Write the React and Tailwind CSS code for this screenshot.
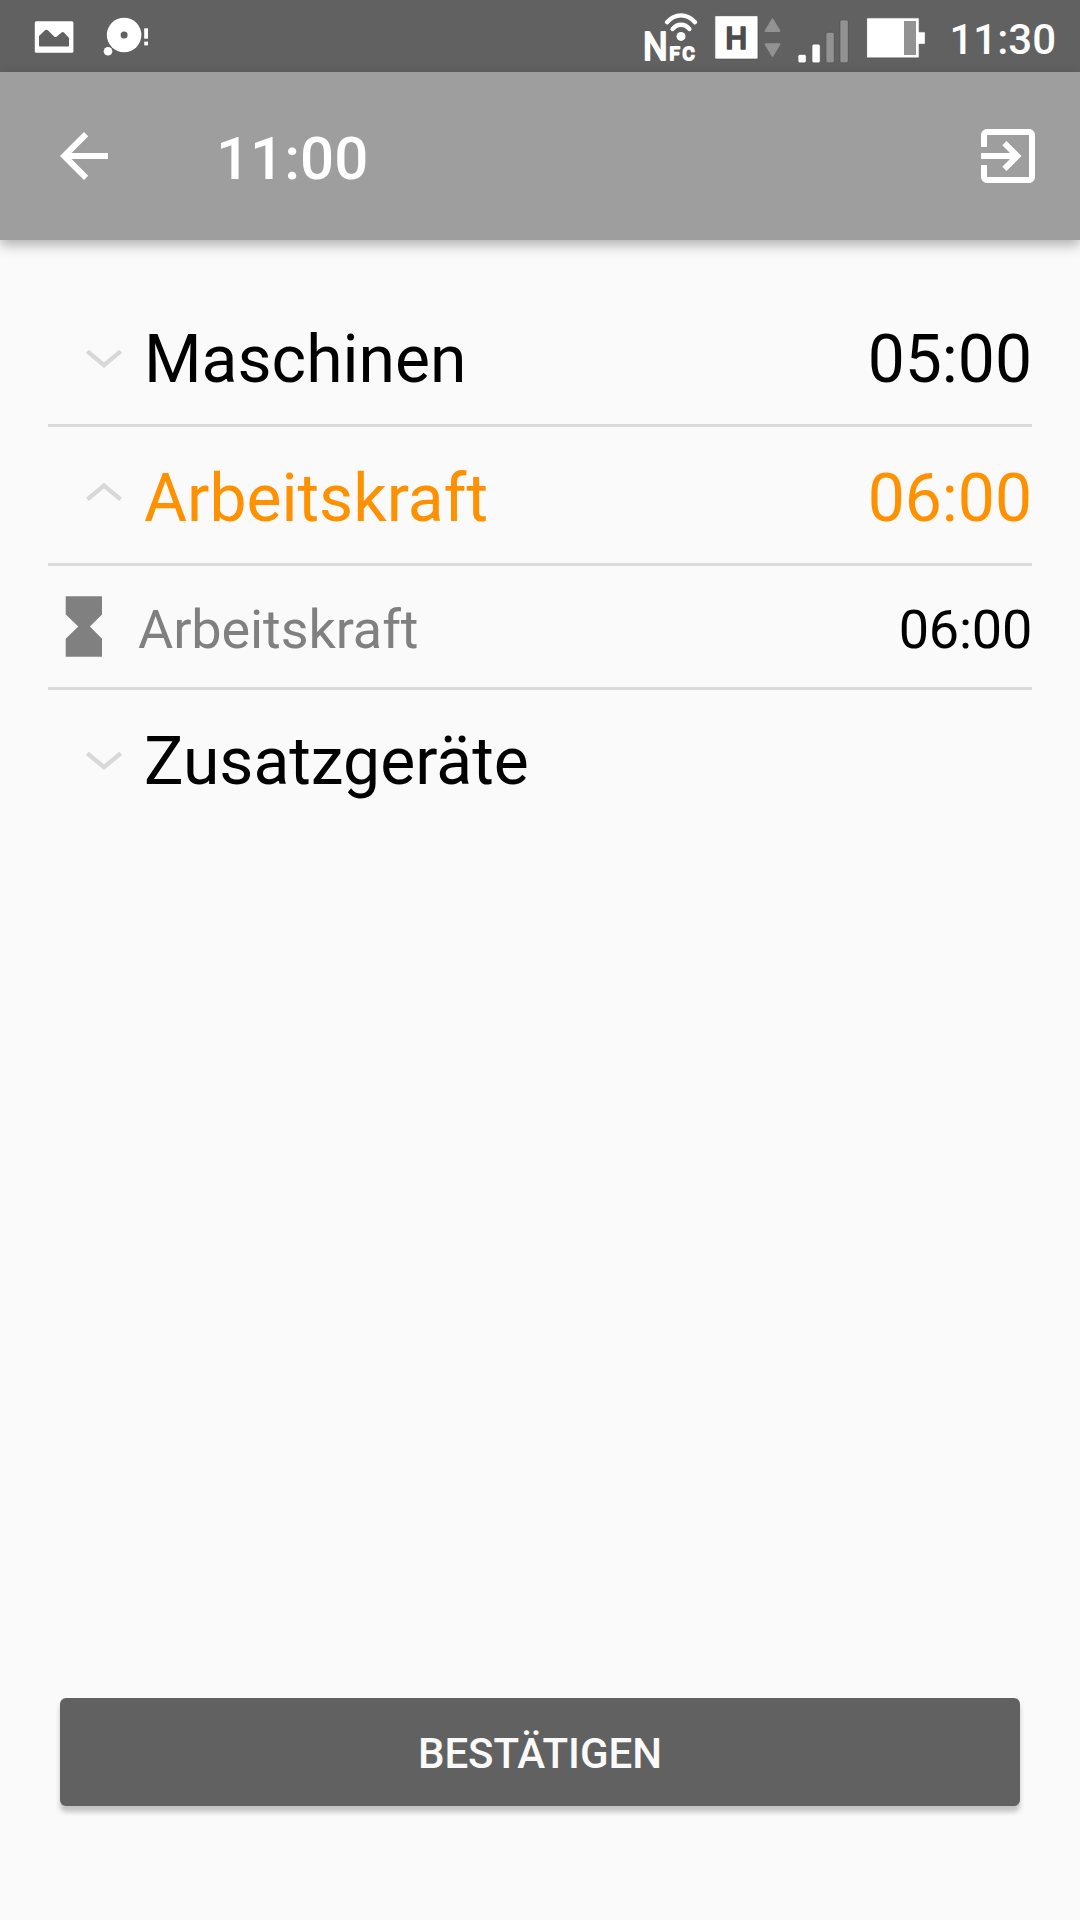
import { useState } from "react";
import { MdArrowBack, MdExitToApp } from "react-icons/md";

const groups = [
  { id: "machines", label: "Maschinen", time: "05:00", items: [] },
  {
    id: "labour",
    label: "Arbeitskraft",
    time: "06:00",
    items: [{ id: "labour-1", label: "Arbeitskraft", time: "06:00" }],
  },
  { id: "extras", label: "Zusatzgeräte", time: "", items: [] },
];

function PictureIcon() {
  return (
    <svg width="40" height="72" viewBox="0 0 40 72" fill="none">
      <rect x="0.8" y="21.2" width="38.6" height="31.6" rx="1.5" fill="#fff" />
      <path
        d="M5 36L11 30.2Q12.4 29.2 13.8 30.2L20.2 36.4Q21.5 37.4 22.8 36.4L27.6 32.4Q28.8 31.6 30 32.6L35 38V45.6Q35 46.6 34 46.6H6Q5 46.6 5 45.6Z"
        fill="#616161"
      />
    </svg>
  );
}

function DiscIcon() {
  return (
    <svg width="46" height="72" viewBox="0 0 46 72" fill="#fff">
      <circle cx="21.1" cy="35" r="17.3" />
      <circle cx="21.1" cy="35" r="3.5" fill="#616161" />
      <circle cx="5" cy="51.2" r="4.9" fill="#616161" />
      <circle cx="5" cy="51.2" r="4.3" />
      <rect x="41.2" y="28.3" width="3.8" height="10.4" />
      <rect x="41.2" y="41.6" width="3.8" height="3.8" />
    </svg>
  );
}

function NfcIcon() {
  return (
    <svg
      width="56"
      height="72"
      viewBox="0 0 56 72"
      fill="#fff"
      fontFamily="Roboto, sans-serif"
      fontWeight="400"
    >
      <g stroke="#fff" strokeWidth="2.2" strokeLinejoin="round">
        <text y="59.8" fontSize="38.5" transform="translate(0 0) scale(0.9 1)">
          N
        </text>
        <text x="26.4" y="59.8" fontSize="18.5">
          F
        </text>
        <text x="39.4" y="59.8" fontSize="18.5">
          C
        </text>
      </g>
      <g fill="none" stroke="#fff" strokeWidth="4.4" strokeLinecap="round">
        <path d="M24 22.2Q30 15.4 38 15.4T52 22.2" />
        <path d="M29.6 29Q33 24.7 38 24.7T46.4 29" />
      </g>
      <circle cx="38" cy="36.4" r="4.5" />
    </svg>
  );
}

function NetworkIcon() {
  return (
    <svg width="70" height="72" viewBox="0 0 70 72">
      <rect x="1.8" y="15.7" width="43.2" height="43.4" rx="1" fill="#fff" stroke="#505050" strokeWidth="0.8" />
      <text
        x="23.2"
        y="48.8"
        textAnchor="middle"
        fontFamily="Roboto, sans-serif"
        fontWeight="500"
        fontSize="31"
        fill="#4c4c4c"
        stroke="#4c4c4c"
        strokeWidth="1.4"
        strokeLinejoin="round"
      >
        H
      </text>
      <g fill="#929292" stroke="#929292" strokeWidth="2" strokeLinejoin="round">
        <path d="M59.5 19.4L66.4 31H52.6Z" />
        <path d="M59.5 55.8L66.4 44.2H52.6Z" />
      </g>
    </svg>
  );
}

function SignalIcon() {
  return (
    <svg width="52" height="72" viewBox="0 0 52 72" stroke="#505050" strokeWidth="0.8">
      <rect x="0.9" y="54.3" width="8.4" height="8.6" rx="2" fill="#fff" />
      <rect x="14.9" y="44" width="8.4" height="18.9" rx="2" fill="#fff" />
      <rect x="28.9" y="32.2" width="8.4" height="30.7" rx="2" fill="#929292" />
      <rect x="42.9" y="19.8" width="8.4" height="43.1" rx="2" fill="#929292" />
    </svg>
  );
}

function BatteryIcon() {
  return (
    <svg width="62" height="72" viewBox="0 0 62 72">
      <path
        d="M2.6 17.8H53.2Q54.2 17.8 54.2 18.8V31.8H60.3V44.3H54.2V56.9Q54.2 57.9 53.2 57.9H2.6Q1.6 57.9 1.6 56.9V18.8Q1.6 17.8 2.6 17.8Z"
        fill="#fff"
        stroke="#505050"
        strokeWidth="0.8"
      />
      <rect x="39" y="21" width="12" height="34" fill="#929292" />
    </svg>
  );
}

function Chevron({ open }) {
  return (
    <svg width="38" height="20" viewBox="0 0 38 20" fill="none" stroke="#d8d8d8" strokeWidth="4.4">
      <path d={open ? "M2.4 17.4L19 3.6L35.6 17.4" : "M2.4 2.4L19 16.2L35.6 2.4"} />
    </svg>
  );
}

function HourglassIcon() {
  return (
    <svg width="37" height="61" viewBox="0 0 37 61" fill="#808080">
      <path d="M0.7 0.3H37V18.5L24.9 30.5L37 42.7V60.7H0.7V42.7L13.3 30.5L0.7 18.5Z" />
    </svg>
  );
}

function StatusBar() {
  return (
    <div className="flex h-[72px] items-center justify-between bg-[#616161] pl-[34px] pr-6">
      <div className="flex items-center gap-[29px]">
        <PictureIcon />
        <DiscIcon />
      </div>
      <div className="flex items-center">
        <div className="flex items-center gap-3.5">
          <NfcIcon />
          <NetworkIcon />
          <SignalIcon />
        </div>
        <div className="ml-4">
          <BatteryIcon />
        </div>
        <span className="w-[129px] pt-2 text-right text-[42px] leading-none font-medium text-white">
          11:30
        </span>
      </div>
    </div>
  );
}

function AppBar() {
  return (
    <header className="relative flex h-[168px] items-center bg-[#9e9e9e] pl-12 pr-9 text-white shadow-[0_5px_12px_rgba(0,0,0,0.3)]">
      <button className="cursor-pointer">
        <MdArrowBack size={72} />
      </button>
      <h1 className="ml-24 flex-1 pt-1.5 text-[60px] leading-none font-medium">11:00</h1>
      <button className="cursor-pointer">
        <MdExitToApp size={72} />
      </button>
    </header>
  );
}

function Group({ group, open, last, onToggle }) {
  return (
    <>
      <button
        onClick={onToggle}
        className={`flex w-full cursor-pointer items-center pl-[37px] text-[66px] leading-none ${
          last ? "h-[136px]" : "h-[139px] border-b-3 border-[#dadada]"
        } ${open ? "text-[#ff9100]" : "text-black"}`}
      >
        <span className={open ? "pb-[7px]" : "pt-[6px]"}>
          <Chevron open={open} />
        </span>
        <span className="ml-[21px] pt-2">{group.label}</span>
        <span className="ml-auto pt-2">{group.time}</span>
      </button>
      {open &&
        group.items.map((item) => (
          <div
            key={item.id}
            className="flex h-[124px] items-center border-b-3 border-[#dadada] pl-[17px] text-[54px] leading-none tracking-[-0.1px]"
          >
            <span className="pb-px">
              <HourglassIcon />
            </span>
            <span className="ml-[36px] pt-[7px] text-[#808080]">{item.label}</span>
            <span className="ml-auto pt-[7px] tracking-[-0.25px] text-black">{item.time}</span>
          </div>
        ))}
    </>
  );
}

export default function App() {
  const [openId, setOpenId] = useState("labour");

  return (
    <div className="flex h-[1920px] w-[1080px] flex-col bg-[#fafafa] font-[Roboto,sans-serif]">
      <StatusBar />
      <AppBar />

      <main className="flex-1 px-12 pt-12">
        {groups.map((group, i) => (
          <Group
            key={group.id}
            group={group}
            open={openId === group.id}
            last={i === groups.length - 1}
            onToggle={() => setOpenId(openId === group.id ? null : group.id)}
          />
        ))}
      </main>

      <footer className="px-[60px] pb-[114px]">
        <button className="h-[108px] w-full cursor-pointer rounded-md bg-[#616161] pt-1 text-[42px] leading-none font-medium text-[#fafafa] shadow-[0_6px_5px_rgba(0,0,0,0.22)]">
          BESTÄTIGEN
        </button>
      </footer>
    </div>
  );
}
